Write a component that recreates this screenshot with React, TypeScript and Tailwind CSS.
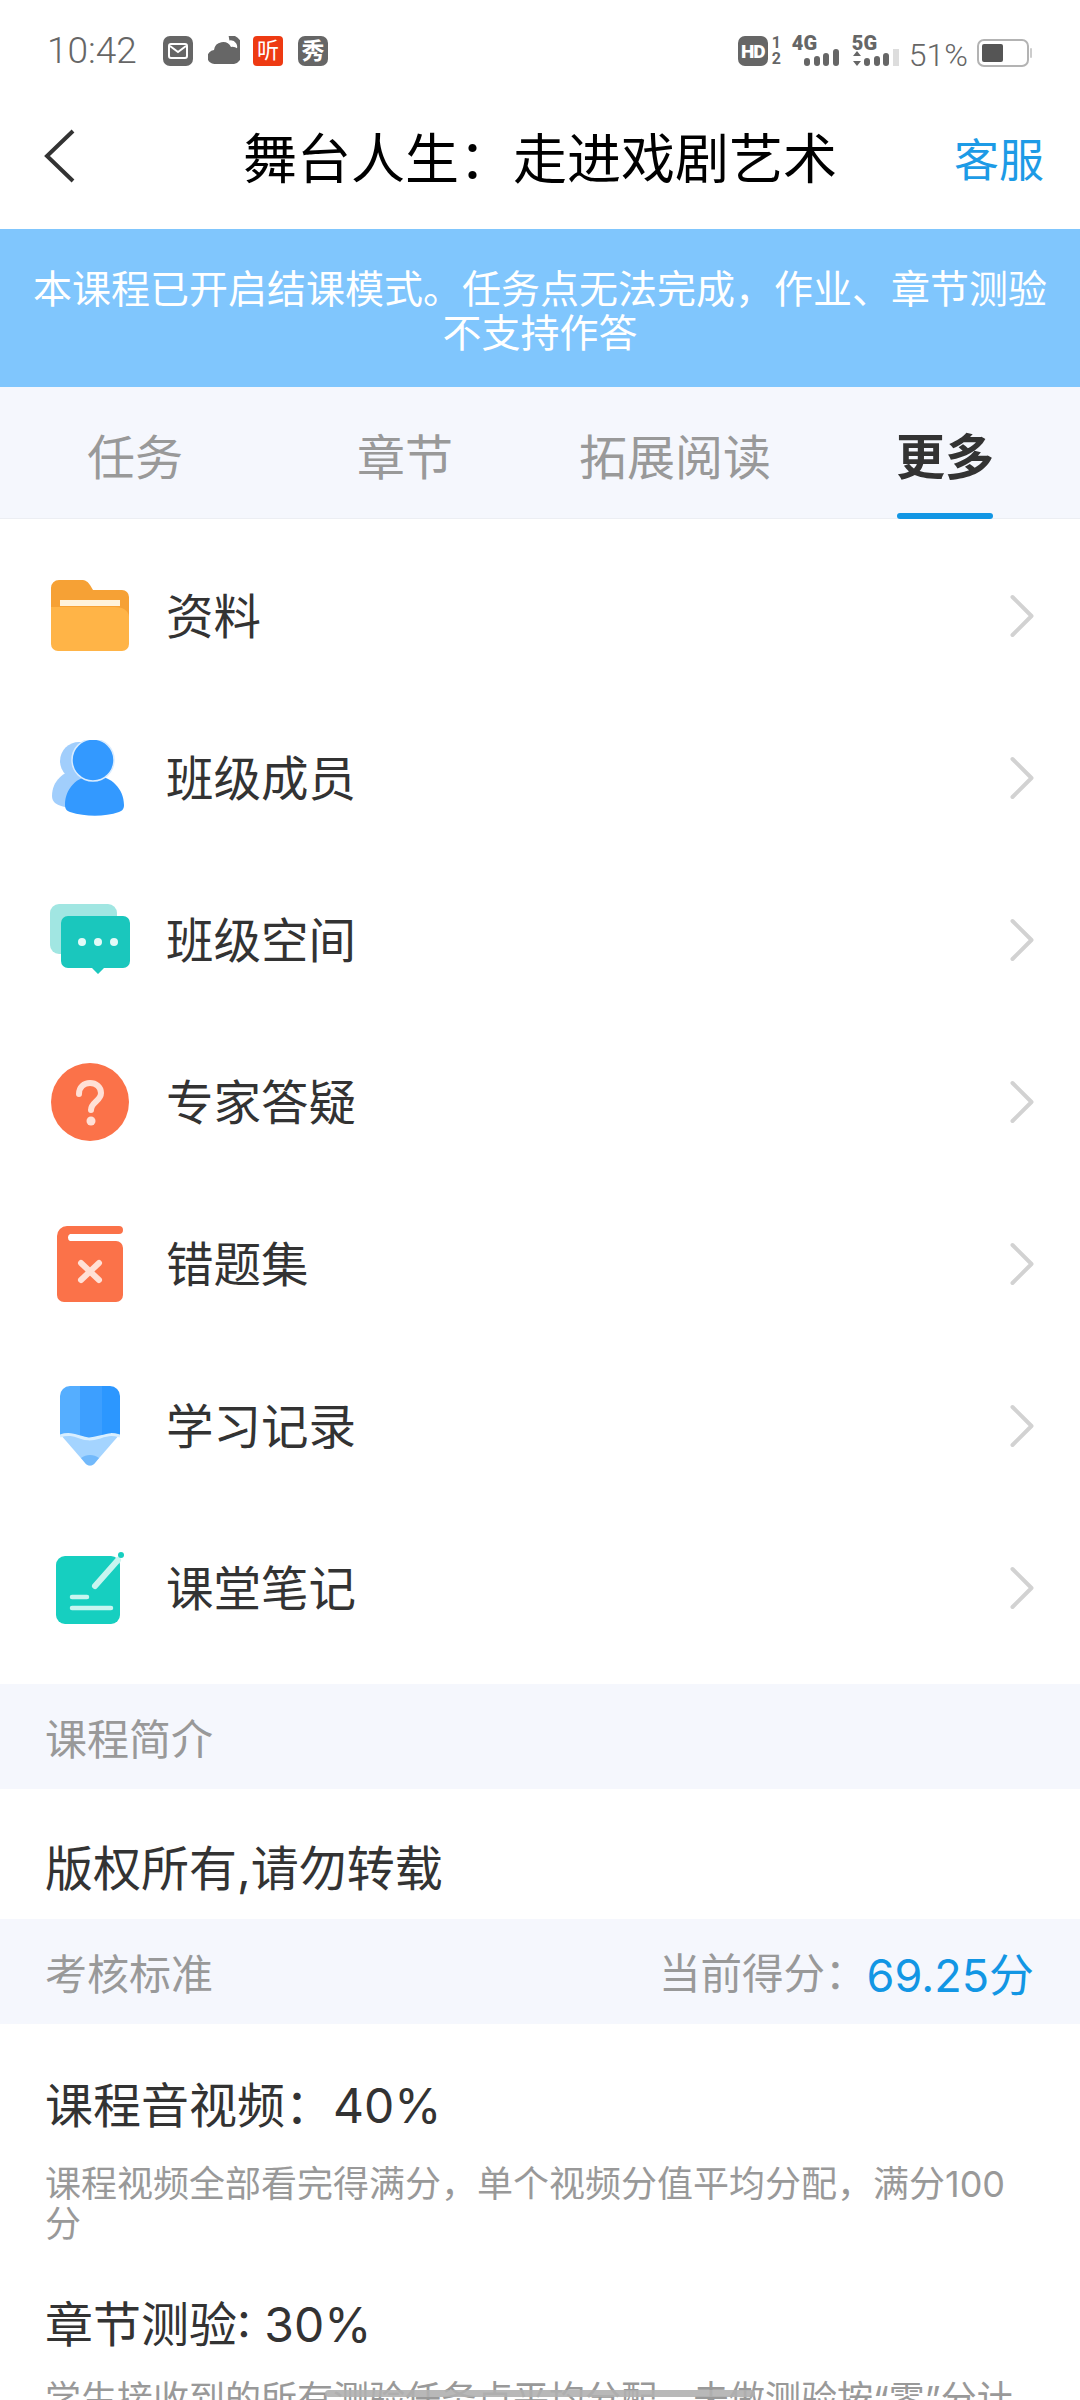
import { ChevronRight } from "lucide-react";
import type { ReactNode } from "react";

function FolderIcon() {
  return (
    <svg width="80" height="72" viewBox="0 0 80 72">
      <path d="M1 8a8 8 0 0 1 8-8h22c5 0 7 2 9 5l3 5h29a7 7 0 0 1 7 7v20H1z" fill="#f6a135" />
      <rect x="10" y="20" width="60" height="6" fill="#fff3dc" />
      <path d="M1 27h64c8 0 14 4 14 10v27a7 7 0 0 1-7 7H8a7 7 0 0 1-7-7z" fill="#ffb447" />
    </svg>
  );
}

function MembersIcon() {
  return (
    <svg width="80" height="76" viewBox="0 0 80 76">
      <circle cx="29" cy="21" r="19" fill="#a1cefc" />
      <path d="M2 56c0-15 12-26 26-26s10 38 6 38C20 68 2 68 2 56z" fill="#a1cefc" />
      <path d="M15 65c0-17 13-30 29-29 16-1 30 12 30 29 0 4-2 6-5 7-15 5-33 5-49 0-3-1-5-3-5-7z" fill="#3399ff" />
      <circle cx="43" cy="20" r="21" fill="#3399ff" stroke="#d9ecff" strokeWidth="1.5" />
    </svg>
  );
}

function ChatIcon() {
  return (
    <svg width="80" height="72" viewBox="0 0 80 72">
      <rect x="0" y="0" width="67" height="50" rx="9" fill="#a1e6e2" />
      <path d="M11 19a7 7 0 0 1 7-7h55a7 7 0 0 1 7 7v38a7 7 0 0 1-7 7H54l-6 6-6-6H18a7 7 0 0 1-7-7z" fill="#1ac7bd" />
      <circle cx="32" cy="38" r="4" fill="#e4faf8" />
      <circle cx="48" cy="38" r="4" fill="#e4faf8" />
      <circle cx="64" cy="38" r="4" fill="#e4faf8" />
    </svg>
  );
}

function QuestionIcon() {
  return (
    <svg width="78" height="78" viewBox="0 0 78 78">
      <circle cx="39" cy="39" r="39" fill="#fb7249" />
      <path d="M28 31c0-7 5-11 11-11s11 4 11 10c0 8-10 9-10 17" fill="none" stroke="#ffe0d6" strokeWidth="6" strokeLinecap="round" />
      <circle cx="40" cy="58" r="4.5" fill="#ffe0d6" />
    </svg>
  );
}

function WrongBookIcon() {
  return (
    <svg width="66" height="76" viewBox="0 0 66 76">
      <path d="M0 10A10 10 0 0 1 10 0h52a4 4 0 0 1 0 8H13a4 4 0 0 0 0 7h46a7 7 0 0 1 7 7v47a7 7 0 0 1-7 7H7a7 7 0 0 1-7-7z" fill="#fb7249" />
      <path d="M24 37l18 17M42 37L24 54" stroke="#ffe0d6" strokeWidth="6" strokeLinecap="round" />
    </svg>
  );
}

function PencilIcon() {
  return (
    <svg width="60" height="80" viewBox="0 0 60 80">
      <path d="M0 48l26 30q4 3 8 0l26-30V40H0z" fill="#a4d4ff" />
      <path d="M0 10A10 10 0 0 1 10 0h10v50c-7 0-13-2-20-1z" fill="#55aeff" />
      <path d="M20 0h22v50c-4 1-7 3-12 3s-6-3-10-3z" fill="#3d9fff" />
      <path d="M42 0h8a10 10 0 0 1 10 10v39c-7-1-13 0-18 1z" fill="#2c97ff" />
      <path d="M0 50c8-3 14-1 20 1s10 3 20 0 12-3 20-1" fill="none" stroke="#d9efff" strokeWidth="3" />
      <path d="M21 72c5-4 13-4 18 0l-5 6q-4 3-8 0z" fill="#72b9fb" />
    </svg>
  );
}

function NoteIcon() {
  return (
    <svg width="68" height="72" viewBox="0 0 68 72">
      <rect x="0" y="4" width="64" height="68" rx="9" fill="#16cfc0" />
      <path d="M39 34L62 8" stroke="#c8f5f0" strokeWidth="6" strokeLinecap="round" />
      <circle cx="65" cy="3" r="3" fill="#16cfc0" />
      <path d="M16 45h15M16 56h39" stroke="#c8f5f0" strokeWidth="4.5" strokeLinecap="round" />
    </svg>
  );
}

function StatusBar() {
  return (
    <div className="relative flex h-[85px] items-start justify-between pt-[36px] pr-[47px] pl-[47px] font-['Roboto','Noto_Sans_CJK_SC',sans-serif]">
      <div className="flex items-center">
        <span className="w-[116px] text-[37px] leading-[30px] font-light text-[#666]">10:42</span>
        <svg width="30" height="30" viewBox="0 0 30 30">
          <rect width="30" height="30" rx="7" fill="#666" />
          <rect x="6" y="8" width="18" height="14" rx="2" fill="none" stroke="#fff" strokeWidth="2" />
          <path d="M7 10l8 6 8-6" fill="none" stroke="#fff" strokeWidth="2" />
        </svg>
        <svg width="32" height="30" viewBox="0 0 32 30" className="ml-[15px]">
          <path d="M21 2a9 9 0 0 1 9 14" fill="none" stroke="#666" strokeWidth="5" />
          <path d="M7 28a7 7 0 0 1-1-14 9 9 0 0 1 17-3 8 8 0 0 1 3 17z" fill="#666" />
        </svg>
        <div className="ml-[13px] flex h-[30px] w-[30px] items-center justify-center rounded-[4px] bg-[#ee3a12] text-[22px] leading-none text-white">听</div>
        <div className="ml-[15px] flex h-[30px] w-[30px] items-center justify-center rounded-[7px] bg-[#666] text-[23px] leading-none font-bold text-white">秀</div>
      </div>
      <div className="flex items-start">
        <div className="flex h-[30px] w-[30px] items-center justify-center rounded-[7px] bg-[#666] text-[19px] leading-none font-black tracking-[-1px] text-white">HD</div>
        <div className="ml-[3px] flex h-[30px] w-[11px] flex-col items-center justify-between text-[16px] leading-[14px] font-bold text-[#666]">
          <span>1</span>
          <span>2</span>
        </div>
        <div className="relative ml-[10px] h-[30px] w-[47px]">
          <span className="absolute top-0 left-0 text-[20px] leading-[15px] font-black text-[#666]">4G</span>
          <svg width="35" height="17" viewBox="0 0 35 17" className="absolute right-0 bottom-0">
            <rect x="0" y="9" width="6" height="8" rx="3" fill="#666" />
            <rect x="10" y="7" width="6" height="10" rx="3" fill="#666" />
            <rect x="19" y="4" width="6" height="13" rx="3" fill="#666" />
            <rect x="29" y="0" width="6" height="17" rx="3" fill="#666" />
          </svg>
        </div>
        <div className="relative ml-[13px] h-[30px] w-[47px]">
          <span className="absolute top-0 left-0 text-[20px] leading-[15px] font-black text-[#666]">5G</span>
          <svg width="10" height="15" viewBox="0 0 10 15" className="absolute bottom-0 left-0">
            <path d="M5 0l4 5H1zM1 10h8l-4 5z" fill="#666" />
          </svg>
          <svg width="35" height="17" viewBox="0 0 35 17" className="absolute right-0 bottom-0">
            <rect x="0" y="9" width="6" height="8" rx="3" fill="#666" />
            <rect x="10" y="7" width="6" height="10" rx="3" fill="#666" />
            <rect x="19" y="4" width="6" height="13" rx="3" fill="#666" />
            <rect x="29" y="0" width="6" height="17" fill="#ddd" />
          </svg>
        </div>
        <span className="mt-[5px] ml-[10px] text-[32px] leading-[28px] font-light text-[#666]">51%</span>
        <svg width="56" height="28" viewBox="0 0 56 28" className="mt-[3px] ml-[9px]">
          <rect x="1" y="1" width="50" height="26" rx="6" fill="none" stroke="#b3b3b3" strokeWidth="2" />
          <rect x="5" y="5" width="21" height="18" rx="2" fill="#555" />
          <rect x="53" y="9" width="2" height="10" rx="1" fill="#ccc" />
        </svg>
      </div>
    </div>
  );
}

function NavBar() {
  return (
    <div className="relative flex h-[144px] items-center justify-center pt-[6px]">
      <svg width="32" height="54" viewBox="0 0 32 54" className="absolute top-[44px] left-[44px]">
        <path d="M29 2L3 27l26 25" fill="none" stroke="#333" strokeWidth="4" />
      </svg>
      <span className="text-[54px] leading-none text-black">舞台人生：走进戏剧艺术</span>
      <span className="absolute right-[36px] text-[45px] leading-none text-[#1d9be6]">客服</span>
    </div>
  );
}

function Tabs() {
  const tabs = ["任务", "章节", "拓展阅读", "更多"];
  return (
    <div className="grid h-[132px] grid-cols-4 border-b border-[#eceef3] bg-[#f5f7fd]">
      {tabs.map((tab, i) => (
        <div key={tab} className="relative flex items-start justify-center pt-[40px]">
          <span className={i === 3 ? "text-[49px] leading-[62px] font-bold text-[#333]" : "text-[48px] leading-[62px] text-[#999]"}>{tab}</span>
          {i === 3 && <div className="absolute bottom-[-1px] left-[87px] h-[6px] w-[96px] rounded-[3px] bg-[#1296e4]" />}
        </div>
      ))}
    </div>
  );
}

function MenuRow({ icon, label }: { icon: ReactNode; label: string }) {
  return (
    <div className="flex h-[162px] items-center pr-[20px]">
      <div className="flex w-[166px] justify-center pl-[13px]">{icon}</div>
      <span className="mt-[2px] flex-1 text-[47.5px] leading-none text-[#333]">{label}</span>
      <ChevronRight size={76} strokeWidth={1.26} className="text-[#d2d2d2]" />
    </div>
  );
}

function SectionHeader({ title, right }: { title: string; right?: ReactNode }) {
  return (
    <div className="flex h-[105px] items-center justify-between bg-[#f5f7fd] pt-[7px] pr-[46px] pl-[45px]">
      <span className="text-[42px] leading-none text-[#999]">{title}</span>
      {right}
    </div>
  );
}

export default function App() {
  const rows = [
    { icon: <FolderIcon />, label: "资料" },
    { icon: <MembersIcon />, label: "班级成员" },
    { icon: <ChatIcon />, label: "班级空间" },
    { icon: <QuestionIcon />, label: "专家答疑" },
    { icon: <WrongBookIcon />, label: "错题集" },
    { icon: <PencilIcon />, label: "学习记录" },
    { icon: <NoteIcon />, label: "课堂笔记" },
  ];

  return (
    <div className="relative h-[2400px] w-[1080px] overflow-hidden bg-white font-['Inter','Noto_Sans_CJK_SC',sans-serif]">
      <StatusBar />
      <NavBar />
      <div className="flex h-[158px] justify-center bg-[#80c6fd] px-[33px] pt-[38px] text-center text-[39px] leading-[44px] text-white">
        <p>本课程已开启结课模式。任务点无法完成，作业、章节测验不支持作答</p>
      </div>
      <Tabs />
      <div className="pt-[16px] pb-[15px]">
        {rows.map((row) => (
          <MenuRow key={row.label} icon={row.icon} label={row.label} />
        ))}
      </div>
      <SectionHeader title="课程简介" />
      <div className="flex h-[130px] items-center px-[45px] pt-[30px] text-[48px] leading-none text-[#333]">版权所有,请勿转载</div>
      <SectionHeader
        title="考核标准"
        right={
          <div className="flex items-center">
            <span className="text-[41.5px] leading-none text-[#999]">当前得分：</span>
            <span className="text-[45px] leading-none text-[#1296e4]">69.25分</span>
          </div>
        }
      />
      <div className="px-[45px] pt-[52px]">
        <div className="text-[48px] leading-[60px] text-[#333]">课程音视频：40%</div>
        <p className="mt-[28px] text-[36px] leading-[40px] text-[#999]">课程视频全部看完得满分，单个视频分值平均分配，满分100分</p>
        <div className="mt-[51px] text-[48px] leading-[60px] text-[#333]">章节测验: 30%</div>
        <p className="mt-[24px] text-[36px] leading-[40px] whitespace-nowrap text-[#999]">学生接收到的所有测验任务点平均分配，未做测验按“零”分计</p>
      </div>
      <div className="absolute bottom-[3px] left-[325px] h-[7px] w-[430px] rounded-full bg-[#b0b0b0]/90" />
    </div>
  );
}
